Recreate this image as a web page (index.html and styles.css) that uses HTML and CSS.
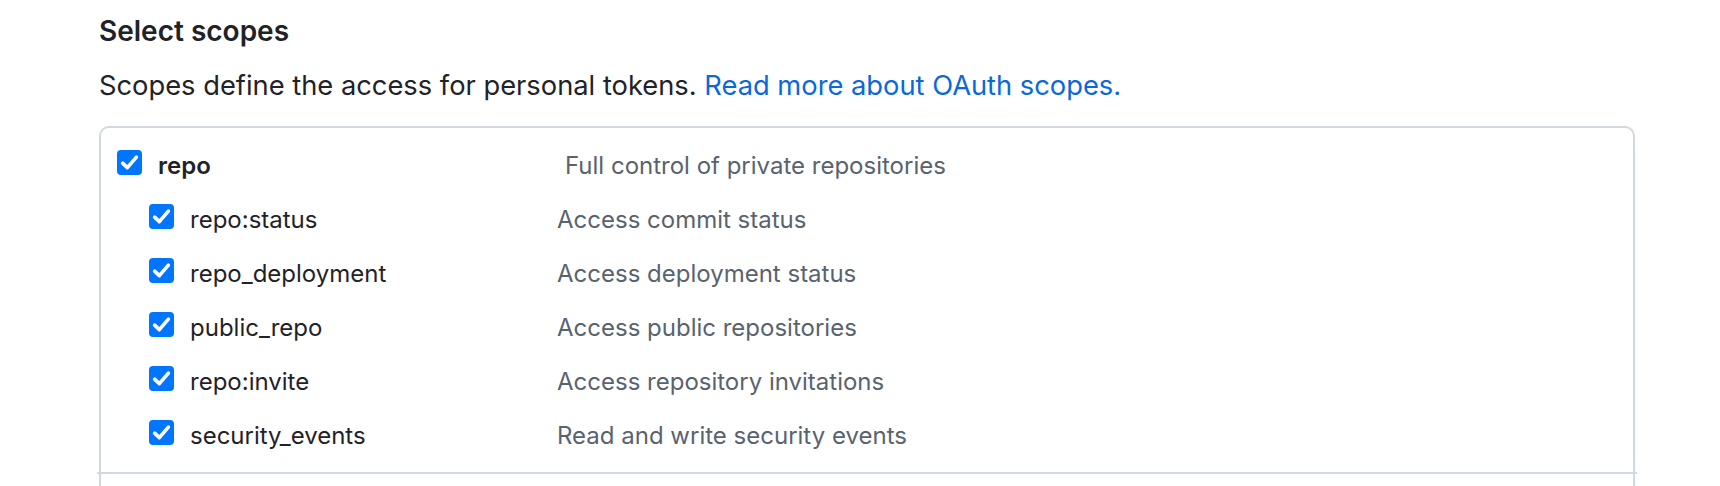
FILE: index.html
```html
<!DOCTYPE html>
<html lang="en">
<head>
<meta charset="utf-8">
<title>Select scopes</title>
<link rel="stylesheet" href="styles.css">
</head>
<body>
<div class="page">
  <h3 class="title">Select scopes</h3>
  <p class="lead">Scopes define the access for personal tokens. <a class="link" href="#">Read more about OAuth scopes.</a></p>
  <div class="scopes">
    <div class="group">
      <div class="row parent">
        <label class="name">
          <span class="check"><svg viewBox="0 0 16 16" width="25" height="25"><path d="M3.6 8.4 L6.6 11.3 L12.4 4.6" fill="none" stroke="#fff" stroke-width="2.3" stroke-linecap="round" stroke-linejoin="round"/></svg></span>
          <span class="label-text">repo</span>
        </label>
        <span class="desc">Full control of private repositories</span>
      </div>
      <div class="row child">
        <label class="name">
          <span class="check"><svg viewBox="0 0 16 16" width="25" height="25"><path d="M3.6 8.4 L6.6 11.3 L12.4 4.6" fill="none" stroke="#fff" stroke-width="2.3" stroke-linecap="round" stroke-linejoin="round"/></svg></span>
          <span class="label-text">repo:status</span>
        </label>
        <span class="desc">Access commit status</span>
      </div>
      <div class="row child">
        <label class="name">
          <span class="check"><svg viewBox="0 0 16 16" width="25" height="25"><path d="M3.6 8.4 L6.6 11.3 L12.4 4.6" fill="none" stroke="#fff" stroke-width="2.3" stroke-linecap="round" stroke-linejoin="round"/></svg></span>
          <span class="label-text">repo_deployment</span>
        </label>
        <span class="desc">Access deployment status</span>
      </div>
      <div class="row child">
        <label class="name">
          <span class="check"><svg viewBox="0 0 16 16" width="25" height="25"><path d="M3.6 8.4 L6.6 11.3 L12.4 4.6" fill="none" stroke="#fff" stroke-width="2.3" stroke-linecap="round" stroke-linejoin="round"/></svg></span>
          <span class="label-text">public_repo</span>
        </label>
        <span class="desc">Access public repositories</span>
      </div>
      <div class="row child">
        <label class="name">
          <span class="check"><svg viewBox="0 0 16 16" width="25" height="25"><path d="M3.6 8.4 L6.6 11.3 L12.4 4.6" fill="none" stroke="#fff" stroke-width="2.3" stroke-linecap="round" stroke-linejoin="round"/></svg></span>
          <span class="label-text">repo:invite</span>
        </label>
        <span class="desc">Access repository invitations</span>
      </div>
      <div class="row child">
        <label class="name">
          <span class="check"><svg viewBox="0 0 16 16" width="25" height="25"><path d="M3.6 8.4 L6.6 11.3 L12.4 4.6" fill="none" stroke="#fff" stroke-width="2.3" stroke-linecap="round" stroke-linejoin="round"/></svg></span>
          <span class="label-text">security_events</span>
        </label>
        <span class="desc">Read and write security events</span>
      </div>
    </div>
    <div class="group next"></div>
  </div>
</div>
</body>
</html>
```

FILE: styles.css
```css
html, body {
  margin: 0;
  padding: 0;
  background: #ffffff;
}

body {
  font-family: "Inter", "Liberation Sans", sans-serif;
  font-size: 24px;
  color: #1f2328;
  overflow: hidden;
  height: 486px;
}

.page {
  padding: 12px 0 0 99px;
}

.title {
  margin: 0 0 15px;
  font-size: 28px;
  line-height: 39px;
  font-weight: 600;
  color: #1f2328;
}

.lead {
  margin: 0 0 21px;
  font-size: 27.3px;
  line-height: 39px;
  color: #1f2328;
}

.link {
  color: #0969da;
  text-decoration: none;
}

.scopes {
  width: 1536px;
  box-sizing: border-box;
  border: 2px solid #d1d9e0;
  border-radius: 10px;
}

.group {
  margin: 0 -4px;
  padding: 11px 4px 9px;
  border-bottom: 2px solid #d1d9e0;
}

.group.next {
  border-bottom: none;
  height: 200px;
}

.row {
  display: flex;
  align-items: center;
  height: 54px;
  line-height: 54px;
}

.name {
  display: flex;
  align-items: center;
  gap: 16px;
  flex: none;
}

.parent {
  padding-left: 16px;
}

.parent .name {
  width: 448px;
  font-weight: 600;
}

.child {
  padding-left: 48px;
}

.child .name {
  width: 408px;
}

.check {
  flex: none;
  width: 25px;
  height: 25px;
  border-radius: 4px;
  background: #0075ff;
  display: flex;
  margin-bottom: 7px;
}

.check svg {
  display: block;
}

.desc {
  color: #59636e;
}
```
